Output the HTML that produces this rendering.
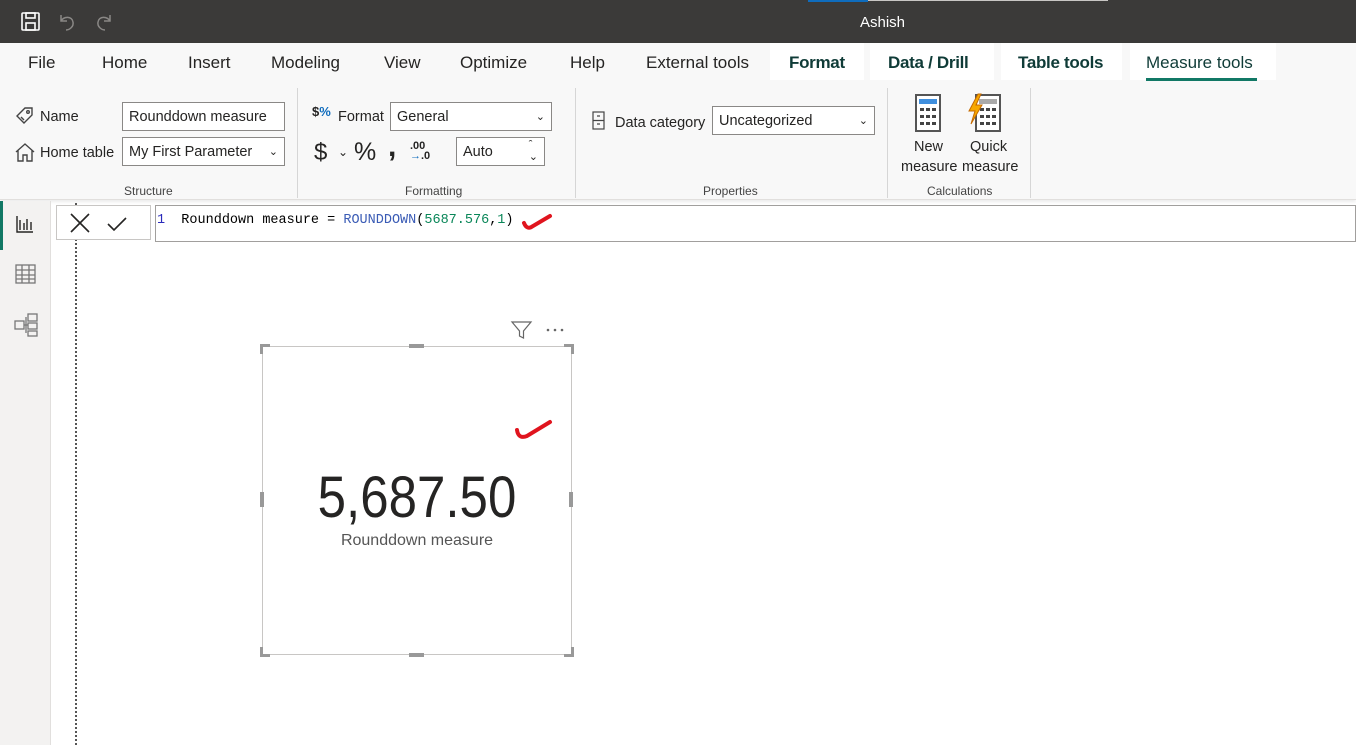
<!DOCTYPE html>
<html><head><meta charset="utf-8"><style>
*{margin:0;padding:0;box-sizing:border-box}
body{width:1356px;height:745px;overflow:hidden;background:#fff;font-family:"Liberation Sans",sans-serif;position:relative;color:#252423}
.a{position:absolute;white-space:nowrap}
.t{font-size:17px;top:53px;color:#252423}
.sel{background:#fff;top:43px;height:37px}
.st{font-weight:bold;color:#0f3b37;letter-spacing:-0.3px}
.lbl{font-size:14.5px;color:#252423}
.box{position:absolute;border:1px solid #8a8886;background:#fff;font-size:14.5px;padding:6px 6px 0;color:#252423}
.grp{font-size:12px;color:#444;top:184px}
.sep{position:absolute;width:1px;background:#d6d6d6;top:88px;height:110px}
.car{position:absolute;font-size:11px;right:6px;top:7px}
</style></head><body>
<div class="a" style="left:0;top:0;width:1356px;height:43px;background:#3b3a39"></div>
<div class="a" style="left:808px;top:0;width:60px;height:2px;background:#0f6cbd"></div>
<div class="a" style="left:868px;top:0;width:240px;height:1px;background:#c8c6c4"></div>
<svg class="a" style="left:20px;top:11px" width="22" height="22" viewBox="0 0 22 22" fill="none" stroke="#fff" stroke-width="1.6"><rect x="2" y="2" width="17" height="17" rx="1"/><rect x="6" y="2" width="9" height="5"/><rect x="6" y="12" width="9" height="7"/></svg>
<svg class="a" style="left:56px;top:11px" width="22" height="22" fill="none" stroke="#8a8886" stroke-width="1.5"><path d="M5 4v6h6M5 10c3-5 11-5 12 1 1 5-4 8-7 8"/></svg>
<svg class="a" style="left:93px;top:11px" width="22" height="22" fill="none" stroke="#8a8886" stroke-width="1.5"><path d="M17 4v6h-6M17 10c-3-5-11-5-12 1-1 5 4 8 7 8"/></svg>
<div class="a" style="left:860px;top:14px;color:#fff;font-size:15px">Ashish</div>

<div class="a" style="left:0;top:43px;width:1356px;height:157px;background:#f8f8f8;border-bottom:1px solid #e1dfdd;box-shadow:0 2px 3px rgba(0,0,0,.08)"></div>
<div class="a sel" style="left:770px;width:94px"></div>
<div class="a sel" style="left:870px;width:124px"></div>
<div class="a sel" style="left:1001px;width:121px"></div>
<div class="a sel" style="left:1130px;width:146px"></div>
<div class="a t" style="left:28px">File</div>
<div class="a t" style="left:102px">Home</div>
<div class="a t" style="left:188px">Insert</div>
<div class="a t" style="left:271px">Modeling</div>
<div class="a t" style="left:384px">View</div>
<div class="a t" style="left:460px">Optimize</div>
<div class="a t" style="left:570px">Help</div>
<div class="a t" style="left:646px">External tools</div>
<div class="a t st" style="left:789px">Format</div>
<div class="a t st" style="left:888px">Data / Drill</div>
<div class="a t st" style="left:1018px">Table tools</div>
<div class="a t" style="left:1146px;color:#0f3b37">Measure tools</div>
<div class="a" style="left:1146px;top:78px;width:111px;height:3px;background:#117865"></div>

<svg class="a" style="left:14px;top:105px" width="22" height="22" fill="none" stroke="#444" stroke-width="1.4"><path d="M3 11l8-8h7v7l-8 8z"/><circle cx="14" cy="7" r="1.3"/><path d="M7 12l3 3"/></svg>
<div class="a lbl" style="left:40px;top:109px">Name</div>
<svg class="a" style="left:13px;top:141px" width="24" height="22" fill="none" stroke="#444" stroke-width="1.4"><path d="M3 11l9-8 9 8M5 9v11h5v-6h4v6h5V9"/></svg>
<div class="a lbl" style="left:40px;top:145px">Home table</div>
<div class="box" style="left:122px;top:102px;width:163px;height:29px">Rounddown measure</div>
<div class="box" style="left:122px;top:137px;width:163px;height:29px">My First Parameter<span class="car">&#8964;</span></div>
<div class="a grp" style="left:124px">Structure</div>
<div class="sep" style="left:297px"></div>

<div class="a" style="left:312px;top:104px;font-size:13px;font-weight:bold">$<span style="color:#0f6cbd">%</span></div>
<div class="a lbl" style="left:338px;top:109px">Format</div>
<div class="box" style="left:390px;top:102px;width:162px;height:29px">General<span class="car">&#8964;</span></div>
<div class="a" style="left:314px;top:139px;font-size:24px">$</div>
<div class="a" style="left:338px;top:145px;font-size:12px">&#8964;</div>
<div class="a" style="left:354px;top:138px;font-size:25px">%</div>
<div class="a" style="left:388px;top:130px;font-size:30px;font-weight:bold">,</div>
<div class="a" style="left:410px;top:141px;font-size:11px;font-weight:bold;line-height:10px">.00<br><span style="color:#0f6cbd">&#8594;</span>.0</div>
<div class="box" style="left:456px;top:137px;width:89px;height:29px">Auto<span class="car" style="top:1px;line-height:12px">&#710;<br>&#8964;</span></div>
<div class="a grp" style="left:405px">Formatting</div>
<div class="sep" style="left:575px"></div>

<svg class="a" style="left:592px;top:111px" width="14" height="20" fill="none" stroke="#444" stroke-width="1.2"><rect x="1" y="1" width="11" height="17"/><path d="M1 9.5h11M5 5h3M5 13h3"/></svg>
<div class="a lbl" style="left:615px;top:115px">Data category</div>
<div class="box" style="left:712px;top:106px;width:163px;height:29px">Uncategorized<span class="car">&#8964;</span></div>
<div class="a grp" style="left:703px">Properties</div>
<div class="sep" style="left:887px"></div>

<svg class="a" style="left:914px;top:94px" width="30" height="38"><rect x="2" y="1" width="24" height="36" fill="#fff" stroke="#555" stroke-width="2"/><rect x="5" y="5" width="18" height="5" fill="#3f8fde"/><g fill="#444"><rect x="6" y="14" width="4" height="3"/><rect x="12" y="14" width="4" height="3"/><rect x="18" y="14" width="4" height="3"/><rect x="6" y="21" width="4" height="3"/><rect x="12" y="21" width="4" height="3"/><rect x="18" y="21" width="4" height="3"/><rect x="6" y="28" width="4" height="3"/><rect x="12" y="28" width="4" height="3"/><rect x="18" y="28" width="4" height="3"/></g></svg>
<svg class="a" style="left:966px;top:93px" width="36" height="40"><rect x="10" y="2" width="24" height="36" fill="#fff" stroke="#555" stroke-width="2"/><rect x="13" y="6" width="18" height="5" fill="#aaa"/><g fill="#444"><rect x="14" y="15" width="4" height="3"/><rect x="20" y="15" width="4" height="3"/><rect x="26" y="15" width="4" height="3"/><rect x="14" y="22" width="4" height="3"/><rect x="20" y="22" width="4" height="3"/><rect x="26" y="22" width="4" height="3"/><rect x="14" y="29" width="4" height="3"/><rect x="20" y="29" width="4" height="3"/><rect x="26" y="29" width="4" height="3"/></g><path d="M12 1L3 18h6L5 31 16 12h-6l5-11z" fill="#f7a800" stroke="#c56a00" stroke-width="1"/></svg>
<div class="a lbl" style="left:914px;top:139px">New</div>
<div class="a lbl" style="left:970px;top:139px">Quick</div>
<div class="a lbl" style="left:901px;top:159px">measure</div>
<div class="a lbl" style="left:962px;top:159px">measure</div>
<div class="a grp" style="left:927px">Calculations</div>
<div class="sep" style="left:1030px"></div>

<div class="a" style="left:0;top:201px;width:51px;height:544px;background:#f3f2f1;border-right:1px solid #e1dfdd"></div>
<div class="a" style="left:0;top:201px;width:3px;height:49px;background:#117865"></div>
<svg class="a" style="left:15px;top:214px" width="20" height="20" fill="none" stroke="#252423" stroke-width="1.4"><path d="M2 2v16h16M5 6v10M9 9v7M12 5v11M16 8v8"/></svg>
<svg class="a" style="left:15px;top:264px" width="21" height="20" fill="none" stroke="#777" stroke-width="1.3"><rect x="1" y="1" width="19" height="18"/><path d="M1 6h19M1 11h19M1 15h19M7 1v18M14 1v18"/></svg>
<svg class="a" style="left:14px;top:313px" width="24" height="24" fill="none" stroke="#777" stroke-width="1.3"><rect x="1" y="8" width="9" height="8"/><rect x="14" y="1" width="9" height="7"/><rect x="14" y="10" width="9" height="6"/><rect x="14" y="18" width="9" height="5"/><path d="M10 12h4M12 4v16"/></svg>

<div class="a" style="left:75px;top:203px;height:542px;border-left:2px dotted #555"></div>
<div class="a" style="left:56px;top:205px;width:95px;height:35px;border:1px solid #c8c6c4;background:#fff"></div>
<svg class="a" style="left:68px;top:211px" width="60" height="24" fill="none" stroke="#252423" stroke-width="1.6"><path d="M3 3l18 18M21 3L3 21M40 13l6 6 12-12"/></svg>
<div class="a" style="left:155px;top:205px;width:1201px;height:37px;border:1px solid #a19f9d;background:#fff"></div>
<div class="a" style="left:157px;top:213px;font-family:'Liberation Mono',monospace;font-size:13.5px;color:#000"><span style="color:#2b2bbb">1</span>&nbsp; Rounddown measure = <span style="color:#3a5bb5">ROUNDDOWN</span>(<span style="color:#098658">5687.576</span>,<span style="color:#098658">1</span>)</div>
<svg class="a" style="left:520px;top:210px" width="36" height="22"><path d="M4 13c2 5 5 6 9 3l17-10" fill="none" stroke="#e0141e" stroke-width="4" stroke-linecap="round"/></svg>

<svg class="a" style="left:510px;top:320px" width="60" height="20" fill="none" stroke="#666" stroke-width="1.2"><path d="M2 2h19l-7.5 9v7l-4-2v-5z"/><g fill="#666" stroke="none"><circle cx="38" cy="10" r="1.3"/><circle cx="45" cy="10" r="1.3"/><circle cx="52" cy="10" r="1.3"/></g></svg>
<div class="a" style="left:262px;top:346px;width:310px;height:309px;border:1px solid #c8c6c4"></div>
<svg class="a" style="left:258px;top:342px" width="318" height="317" fill="#999"><path d="M2 2h10v3H5v7H2z"/><path d="M316 2h-10v3h7v7h3z"/><path d="M2 315h10v-3H5v-7H2z"/><path d="M316 315h-10v-3h7v-7h3z"/><rect x="151" y="2" width="15" height="4"/><rect x="151" y="311" width="15" height="4"/><rect x="2" y="150" width="4" height="15"/><rect x="311" y="150" width="4" height="15"/></svg>
<svg class="a" style="left:512px;top:414px" width="44" height="28"><path d="M5 16c1 7 5 8 10 6l23-14" fill="none" stroke="#e0141e" stroke-width="4" stroke-linecap="round"/></svg>
<div class="a" style="left:262px;width:310px;top:464px;text-align:center;font-size:58px;color:#252423;transform:scaleX(.88)">5,687.50</div>
<div class="a" style="left:262px;width:310px;top:532px;text-align:center;font-size:16px;color:#555">Rounddown measure</div>
</body></html>
